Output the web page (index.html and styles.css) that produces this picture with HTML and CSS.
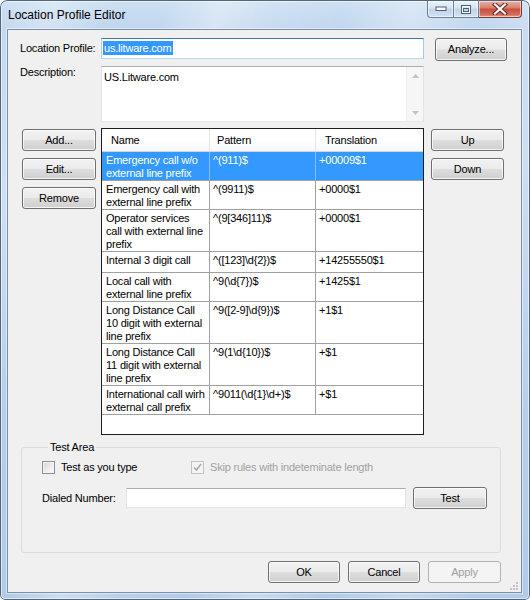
FILE: index.html
```html
<!DOCTYPE html>
<html>
<head>
<meta charset="utf-8">
<link rel="stylesheet" href="styles.css">
</head>
<body>
<div class="window">
  <div class="titlebar">
    <span class="title">Location Profile Editor</span>
    <div class="caption">
      <div class="cbtn min">
        <svg width="12" height="6" viewBox="0 0 12 6"><rect x="1" y="1" width="10" height="3.5" fill="#fff" stroke="#4d5f74" stroke-width="1"/></svg>
      </div>
      <div class="cbtn max">
        <svg width="12" height="11" viewBox="0 0 12 11"><rect x="1.5" y="1.5" width="9" height="8" fill="none" stroke="#4d5f74" stroke-width="1"/><rect x="3.5" y="4.5" width="5" height="3" fill="none" stroke="#4d5f74" stroke-width="1"/><rect x="2.5" y="2.5" width="7" height="6" fill="none" stroke="#fff" stroke-width="1"/></svg>
      </div>
      <div class="cbtn close">
        <svg width="16" height="12" viewBox="0 0 16 12"><path d="M3 1.5 L13 10.5 M13 1.5 L3 10.5" stroke="#6a2a22" stroke-width="4.2" stroke-linecap="square"/><path d="M3 1.5 L13 10.5 M13 1.5 L3 10.5" stroke="#fff" stroke-width="2.2" stroke-linecap="square"/></svg>
      </div>
    </div>
  </div>

  <div class="client">
    <div class="row row-profile">
      <label class="lbl">Location Profile:</label>
      <div class="textbox focused profile"><span class="sel">us.litware.com</span></div>
      <button class="btn analyze">Analyze...</button>
    </div>

    <div class="row row-desc">
      <label class="lbl lbl-top">Description:</label>
      <div class="textbox desc">
        <div class="desc-text">US.Litware.com</div>
        <div class="vscroll">
          <div class="sb-btn"><svg width="7" height="4" viewBox="0 0 7 4"><path d="M0 4 L3.5 0 L7 4 Z" fill="#c3c3c3"/></svg></div>
          <div class="sb-track"></div>
          <div class="sb-btn"><svg width="7" height="4" viewBox="0 0 7 4"><path d="M0 0 L3.5 4 L7 0 Z" fill="#c3c3c3"/></svg></div>
        </div>
      </div>
    </div>

    <div class="row row-rules">
      <div class="side-btns left">
        <button class="btn side">Add...</button>
        <button class="btn side">Edit...</button>
        <button class="btn side">Remove</button>
      </div>

      <div class="listview">
        <div class="lv-head">
          <div class="hc">Name</div>
          <div class="hc">Pattern</div>
          <div class="hc">Translation</div>
        </div>
        <div class="lv-row sel-row">
          <div class="c">Emergency call w/o<br>external line prefix</div>
          <div class="c">^(911)$</div>
          <div class="c">+00009$1</div>
        </div>
        <div class="lv-row">
          <div class="c">Emergency call with<br>external line prefix</div>
          <div class="c">^(9911)$</div>
          <div class="c">+0000$1</div>
        </div>
        <div class="lv-row">
          <div class="c">Operator services<br>call with external line<br>prefix</div>
          <div class="c">^(9[346]11)$</div>
          <div class="c">+0000$1</div>
        </div>
        <div class="lv-row one">
          <div class="c">Internal 3 digit call</div>
          <div class="c">^([123]\d{2})$</div>
          <div class="c">+14255550$1</div>
        </div>
        <div class="lv-row">
          <div class="c">Local call with<br>external line prefix</div>
          <div class="c">^9(\d{7})$</div>
          <div class="c">+1425$1</div>
        </div>
        <div class="lv-row">
          <div class="c">Long Distance Call<br>10 digit with external<br>line prefix</div>
          <div class="c">^9([2-9]\d{9})$</div>
          <div class="c">+1$1</div>
        </div>
        <div class="lv-row">
          <div class="c">Long Distance Call<br>11 digit with external<br>line prefix</div>
          <div class="c">^9(1\d{10})$</div>
          <div class="c">+$1</div>
        </div>
        <div class="lv-row">
          <div class="c">International call wirh<br>external call prefix</div>
          <div class="c">^9011(\d{1}\d+)$</div>
          <div class="c">+$1</div>
        </div>
      </div>

      <div class="side-btns right">
        <button class="btn side-r">Up</button>
        <button class="btn side-r">Down</button>
      </div>
    </div>

    <fieldset class="test-area">
      <legend>Test Area</legend>
      <div class="checks">
        <div class="chk-item first">
          <span class="chk"></span>
          <span>Test as you type</span>
        </div>
        <div class="chk-item disabled">
          <span class="chk chk-dis"><svg width="11" height="11" viewBox="0 0 11 11"><path d="M2 5.5 L4.5 8 L9 2" fill="none" stroke="#a9a9a9" stroke-width="1.6"/></svg></span>
          <span>Skip rules with indeteminate length</span>
        </div>
      </div>
      <div class="dialed">
        <label class="lbl-dialed">Dialed Number:</label>
        <div class="textbox dial-input"></div>
        <button class="btn test">Test</button>
      </div>
    </fieldset>

    <div class="dialog-btns">
      <button class="btn dlg">OK</button>
      <button class="btn dlg">Cancel</button>
      <button class="btn dlg apply" disabled>Apply</button>
    </div>

    <div class="grip">
      <svg width="10" height="10" viewBox="0 0 10 10">
        <rect x="7" y="1" width="2" height="2" fill="#c4c4c4"/>
        <rect x="4" y="4" width="2" height="2" fill="#c4c4c4"/>
        <rect x="7" y="4" width="2" height="2" fill="#c4c4c4"/>
        <rect x="1" y="7" width="2" height="2" fill="#c4c4c4"/>
        <rect x="4" y="7" width="2" height="2" fill="#c4c4c4"/>
        <rect x="7" y="7" width="2" height="2" fill="#c4c4c4"/>
      </svg>
    </div>
  </div>
</div>
</body>
</html>
```
FILE: styles.css
```css
* { box-sizing: border-box; }

body {
  margin: 0;
  font: 11px/13px "Liberation Sans", Arial, sans-serif;
  letter-spacing: -0.2px;
  color: #000;
  background: #fff;
}

.window {
  width: 530px;
  height: 600px;
  display: flex;
  flex-direction: column;
  border-radius: 7px 7px 5px 5px;
  background:
    linear-gradient(105deg,
      rgba(255,255,255,0) 0%,
      rgba(255,255,255,.30) 8%,
      rgba(255,255,255,0) 16%,
      rgba(255,255,255,0) 24%,
      rgba(255,255,255,.35) 32%,
      rgba(255,255,255,.10) 40%,
      rgba(255,255,255,0) 50%,
      rgba(255,255,255,.30) 60%,
      rgba(255,255,255,0) 70%,
      rgba(255,255,255,.25) 82%,
      rgba(255,255,255,0) 92%),
    linear-gradient(#cde0f3 0, #c0d6ee 30px, #b2cbe8 100%);
  box-shadow: inset 0 0 0 1px #52667e, inset 0 0 0 2px rgba(255,255,255,.55);
}

/* Title bar */
.titlebar {
  height: 29px;
  display: flex;
  align-items: flex-start;
  flex-shrink: 0;
}

.title {
  margin: 8px 0 0 8px;
  font-size: 12px;
  line-height: 14px;
  letter-spacing: 0;
}

.caption {
  margin: 1px 8px 0 auto;
  display: flex;
}

.cbtn {
  height: 17px;
  display: flex;
  align-items: center;
  justify-content: center;
  border: 1px solid #6c819b;
  border-top: none;
  background: linear-gradient(#edf3fa 0%, #d6e3f1 45%, #c0d3e8 50%, #d3e2f2 100%);
  box-shadow: inset 0 0 0 1px rgba(255,255,255,.5);
}

.cbtn.min { width: 27px; border-radius: 0 0 0 4px; }
.cbtn.max { width: 25px; border-left: none; }
.cbtn.close {
  width: 43px;
  border-radius: 0 0 4px 0;
  border-left: none;
  border-color: #7a3a32;
  background: linear-gradient(#eab1a4 0%, #db8371 40%, #c8503e 52%, #d36d5c 85%, #e69c85 100%);
}

/* Client area */
.client {
  flex: 1;
  margin: 0 8px 7px 7px;
  border: 1px solid #7b8fa6;
  background: #f0f0f0;
  padding: 8px 20px 0 12px;
  position: relative;
  box-shadow: 0 0 0 1px rgba(255,255,255,.45);
}

.row {
  display: flex;
  align-items: flex-start;
}
.row > * { flex-shrink: 0; }

.lbl {
  width: 81px;
}

.row-profile {
  height: 21px;
  align-items: center;
}

.textbox {
  background: #fff;
  border: 1px solid;
  border-color: #abadb3 #e2e3ea #e3e9ef #e2e3ea;
}

.textbox.focused {
  border-color: #3d7bad #a4c9e3 #b7d9ed #b5cfe7;
}

.profile {
  width: 323px;
  height: 21px;
  padding: 2px 1px;
}

.sel {
  display: inline-block;
  background: #3399ff;
  color: #fff;
  line-height: 14px;
  padding: 0 1px 0 1px;
}

.btn {
  font: 11px/13px "Liberation Sans", Arial, sans-serif;
  letter-spacing: -0.2px;
  color: #000;
  height: 22px;
  padding: 0;
  border: 1px solid #707070;
  border-radius: 3px;
  background: linear-gradient(#f2f2f2 0%, #ebebeb 48%, #dddddd 52%, #cfcfcf 100%);
  box-shadow: inset 0 0 0 1px rgba(252,252,252,.8);
}

.btn:disabled {
  color: #a0a0a0;
  border-color: #adb2b5;
  background: #f4f4f4;
  box-shadow: none;
}

.analyze {
  width: 72px;
  height: 23px;
  margin: 2px 0 0 11px;
}

.row-desc {
  margin-top: 7px;
}

.desc {
  width: 323px;
  height: 56px;
  display: flex;
}

.desc-text {
  flex: 1;
  padding: 4px 2px;
}

.vscroll {
  width: 17px;
  display: flex;
  flex-direction: column;
  background: #f6f6f6;
  border-left: 1px solid #ededed;
}

.sb-btn {
  height: 17px;
  display: flex;
  align-items: center;
  justify-content: center;
}

.sb-track { flex: 1; }

/* Rules area */
.row-rules {
  margin-top: 6px;
}

.side-btns {
  display: flex;
  flex-direction: column;
  gap: 7px;
  padding-top: 1px;
}

.side-btns.left {
  width: 81px;
  padding-left: 2px;
}

.side-btns.right {
  margin-left: 7px;
}

.btn.side { width: 74px; }
.btn.side-r { width: 73px; }

.listview {
  width: 323px;
  height: 307px;
  border: 1px solid #1e1e1e;
  background: #fff;
}

.lv-head,
.lv-row {
  display: grid;
  grid-template-columns: 108px 106px 1fr;
}

.lv-head {
  height: 23px;
  border-bottom: 1px solid #d5d5d5;
  background: linear-gradient(#ffffff 0%, #ffffff 50%, #f6f7f9 100%);
}

.hc {
  padding-left: 9px;
  line-height: 22px;
  border-right: 1px solid #e4e6e9;
}
.hc:nth-child(2) { padding-left: 7px; }
.hc:last-child { border-right: none; }

.lv-row {
  border-bottom: 1px solid #a0a0a0;
}

.lv-row.one { height: 21px; }

.c {
  padding: 2px 2px 0 4px;
  border-right: 1px solid #a0a0a0;
  white-space: nowrap;
}
.c:nth-child(2), .c:nth-child(3) { padding-left: 3px; }
.c:last-child { border-right: none; }

.sel-row {
  background: #3399ff;
  color: #fff;
}
.sel-row .c { border-right-color: #86bff7; }

/* Test area */
.test-area {
  margin: 6px 0 0 1px;
  width: 480px;
  height: 112px;
  padding: 7px 0 0 20px;
  border: 1px solid #d5dfe5;
  border-radius: 3px;
  min-width: 0;
}

.test-area legend {
  padding: 0 2px;
  margin-left: 6px;
  line-height: 13px;
}

.checks {
  display: flex;
  align-items: center;
  height: 13px;
}

.chk-item {
  display: flex;
  align-items: center;
  gap: 6px;
}

.chk-item.first { width: 149px; }

.chk-item.disabled { color: #a0a0a0; }

.chk {
  width: 13px;
  height: 13px;
  border: 1px solid #8f8f8f;
  background: linear-gradient(135deg, #d4d6d9 0%, #f3f3f3 70%, #fbfbfb 100%);
  box-shadow: inset 0 0 0 1px #f4f4f4;
  display: flex;
  align-items: center;
  justify-content: center;
}

.chk-dis {
  border-color: #c2c2c2;
  background: #f4f4f4;
}

.dialed {
  margin-top: 13px;
  display: flex;
  align-items: center;
  height: 22px;
}

.lbl-dialed {
  width: 84px;
}

.dial-input {
  width: 280px;
  height: 20px;
}

.btn.test {
  width: 74px;
  margin-left: 7px;
}

/* Dialog buttons */
.dialog-btns {
  margin-top: 8px;
  display: flex;
  justify-content: flex-end;
  gap: 8px;
}

.btn.dlg { width: 72px; }
.btn.dlg.apply { width: 73px; }

.grip {
  position: absolute;
  right: 2px;
  bottom: 1px;
  width: 10px;
  height: 10px;
  line-height: 0;
}
```
